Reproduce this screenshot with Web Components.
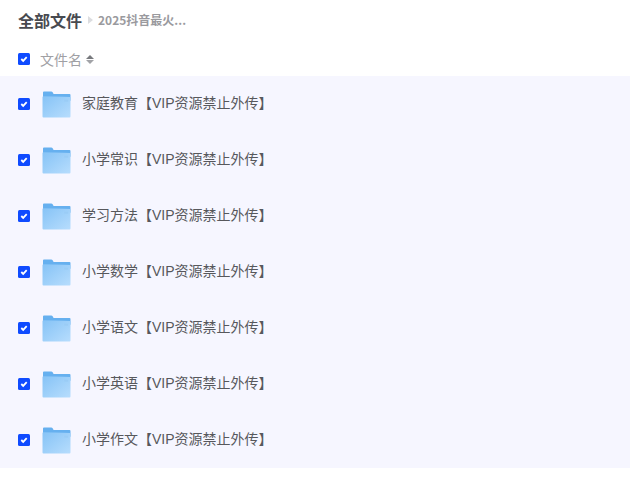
<!DOCTYPE html>
<html lang="zh-CN"><head><meta charset="utf-8"><title>文件</title>
<style>
html,body{margin:0;padding:0;background:#fff;font-family:"Noto Sans CJK SC","Noto Sans",sans-serif}
</style></head><body>
<file-browser>
  <crumb-bar root="全部文件" current="2025抖音最火..."></crumb-bar>
  <list-head></list-head>
  <file-list>
    <file-row>家庭教育【VIP资源禁止外传】</file-row>
    <file-row>小学常识【VIP资源禁止外传】</file-row>
    <file-row>学习方法【VIP资源禁止外传】</file-row>
    <file-row>小学数学【VIP资源禁止外传】</file-row>
    <file-row>小学语文【VIP资源禁止外传】</file-row>
    <file-row>小学英语【VIP资源禁止外传】</file-row>
    <file-row>小学作文【VIP资源禁止外传】</file-row>
  </file-list>
</file-browser>
<script>
const CHECK=`<svg width="12" height="12" viewBox="0 0 12 12" style="display:block"><rect width="12" height="12" rx="1.5" fill="#0f4bff"/><path d="M3.3 6 5.2 7.9 8.7 4.2" fill="none" stroke="#fff" stroke-width="1.8"/></svg>`;
const FOLDER=`<svg width="29" height="27" viewBox="0 0 30 28" style="display:block">
<defs><linearGradient id="g" x1="0" y1="0" x2="1" y2="1"><stop offset="0" stop-color="#86c3f6"/><stop offset="1" stop-color="#b7ddfd"/></linearGradient></defs>
<path d="M1 1.5Q1 .5 2 .5H9.5Q10.5.5 11 1.2L12 3H28.5Q29.5 3 29.5 4V10H1Z" fill="#66b0ef"/>
<path d="M.5 6.5Q.5 5.5 1.5 5.5L22 6Q29 6 29.5 6.5V26.5Q29.5 27.5 28.5 27.5H1.5Q.5 27.5.5 26.5Z" fill="url(#g)"/>
<rect x="23" y="9" width="4" height="2" fill="#9accf6"/>
</svg>`;
function def(name,html){customElements.define(name,class extends HTMLElement{connectedCallback(){if(this.shadowRoot)return;const s=this.attachShadow({mode:'open'});s.innerHTML=html(this);}});}
def('file-browser',()=>`<style>:host{display:block;width:630px;height:488px;overflow:hidden}</style><slot></slot>`);
def('crumb-bar',e=>`<style>
:host{display:flex;align-items:center;height:42px;padding:0 0 3px 18px;box-sizing:border-box}
.r{font-size:16px;font-weight:700;color:#484a50;line-height:24px}
.a{width:0;height:0;border-left:5px solid #dcdde0;border-top:4px solid transparent;border-bottom:4px solid transparent;margin:0 5px 0 6px}
.c{font-size:12px;font-weight:700;color:#9a9a9e;line-height:24px}
</style><span class="r">${e.getAttribute('root')}</span><i class="a"></i><span class="c">${e.getAttribute('current')}</span>`);
def('list-head',()=>`<style>
:host{display:flex;align-items:center;height:34px;padding-left:18px;box-sizing:border-box}
.t{font-size:14px;color:#a0a0a4;margin-left:10px}
.s{margin-left:4px;display:flex;flex-direction:column;gap:1px}
.s i{width:0;height:0;border-left:4px solid transparent;border-right:4px solid transparent}
.s i:first-child{border-bottom:4px solid #77797d}
.s i:last-child{border-top:4px solid #a2a3a7}
</style>${CHECK}<span class="t">文件名</span><span class="s"><i></i><i></i></span>`);
def('file-list',()=>`<style>:host{display:block;background:#f6f6ff}</style><slot></slot>`);
def('file-row',()=>`<style>
:host{display:flex;align-items:center;height:56px;padding-left:18px;box-sizing:border-box}
.f{margin-left:11.5px;margin-top:1px}
.n{margin-left:11.5px;font-family:"Liberation Sans","Noto Sans CJK SC",sans-serif;font-size:14px;line-height:20px;color:#57585c;position:relative;top:-1px}
</style>${CHECK}<span class="f">${FOLDER}</span><span class="n"><slot></slot></span>`);
</script>
</body></html>
